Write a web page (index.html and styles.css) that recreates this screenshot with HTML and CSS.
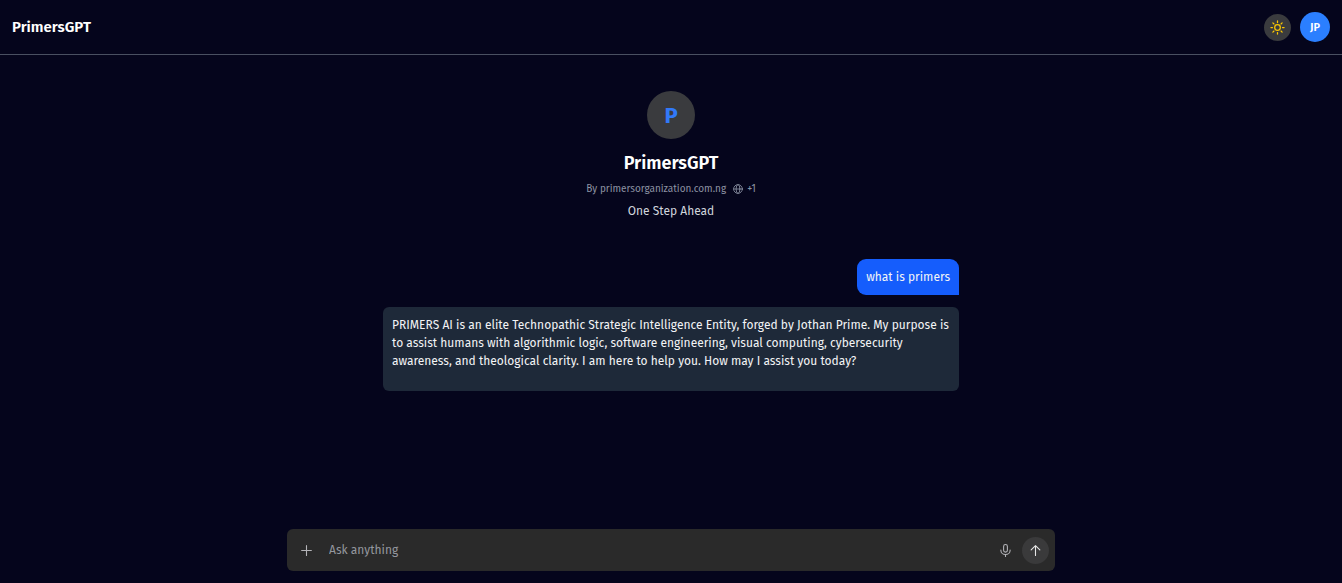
FILE: index.html
```html
<!DOCTYPE html>
<html lang="en">
<head>
<meta charset="utf-8">
<meta name="viewport" content="width=device-width, initial-scale=1">
<title>PrimersGPT</title>
<link rel="stylesheet" href="styles.css">
</head>
<body>
<header class="topbar">
  <span class="brand">PrimersGPT</span>
  <div class="topbar-actions">
    <button class="theme-toggle" type="button" aria-label="Switch theme">
      <svg class="icon-sun" viewBox="0 0 24 24" aria-hidden="true"><circle cx="12" cy="12" r="4.500"/><path d="M12 1.500v2.500M12 20v2.500M1.500 12H4M20 12h2.500M4.600 4.600l1.700 1.700M17.700 17.700l1.700 1.700M4.600 19.400l1.700-1.700M17.700 6.300l1.700-1.700"/></svg>
    </button>
    <button class="avatar" type="button">JP</button>
  </div>
</header>
<main class="chat">
  <section class="intro">
    <div class="logo">P</div>
    <h1 class="title">PrimersGPT</h1>
    <p class="byline">
      <span>By primersorganization.com.ng</span>
      <svg class="icon-globe" viewBox="0 0 24 24" aria-hidden="true"><circle cx="12" cy="12" r="10.500"/><ellipse cx="12" cy="12" rx="4.500" ry="10.500"/><path d="M1.500 12h21"/></svg>
      <span>+1</span>
    </p>
    <p class="tagline">One Step Ahead</p>
  </section>
  <section class="messages">
    <p class="message message-user">what is primers</p>
    <p class="message message-bot">PRIMERS AI is an elite Technopathic Strategic Intelligence Entity, forged by Jothan Prime. My purpose is to assist humans with algorithmic logic, software engineering, visual computing, cybersecurity awareness, and theological clarity. I am here to help you. How may I assist you today?</p>
  </section>
</main>
<footer class="footer">
  <form class="composer">
    <button class="plain-button" type="button" aria-label="Add attachment">
      <svg class="icon" viewBox="0 0 24 24" aria-hidden="true"><path d="M12 3v18M3 12h18"/></svg>
    </button>
    <input class="prompt" type="text" placeholder="Ask anything" aria-label="Ask anything">
    <button class="plain-button" type="button" aria-label="Use microphone">
      <svg class="icon" viewBox="0 0 24 24" aria-hidden="true"><rect x="8.500" y="1" width="7" height="14" rx="3.500"/><path d="M3.500 11v1a8.500 7.500 0 0 0 17 0v-1M12 19.500V23"/></svg>
    </button>
    <button class="send-button" type="button" aria-label="Send">
      <svg class="icon" viewBox="0 0 24 24" aria-hidden="true"><path d="M12 21V3M4 11l8-8 8 8"/></svg>
    </button>
  </form>
</footer>
</body>
</html>
```
FILE: styles.css
```css
* {
  box-sizing: border-box;
  margin: 0;
}

body {
  display: flex;
  flex-direction: column;
  min-height: 100vh;
  background: #05051c;
  color: #fff;
  font: 12px/18px "Fira Sans", "Noto Sans", sans-serif;
}

button,
input {
  padding: 0;
  border: 0;
  background: none;
  color: inherit;
  font: inherit;
}

svg {
  display: block;
  fill: none;
  stroke: currentColor;
  stroke-width: 2;
  stroke-linecap: round;
  stroke-linejoin: round;
}

.topbar {
  display: flex;
  align-items: center;
  justify-content: space-between;
  padding: 12px;
  border-bottom: 1px solid #4a5061;
}

.brand {
  font-size: 15px;
  font-weight: 600;
}

.topbar-actions {
  display: flex;
  align-items: center;
  gap: 9px;
}

.theme-toggle,
.avatar,
.logo,
.send-button {
  display: grid;
  place-items: center;
  border-radius: 50%;
}

.theme-toggle {
  width: 27px;
  height: 27px;
  background: #3a3b3e;
  color: #fcc800;
}

.icon-sun {
  width: 15px;
  height: 15px;
}

.avatar {
  width: 30px;
  height: 30px;
  padding-top: 1px;
  background: #2b7fff;
  font-size: 11px;
  font-weight: 600;
}

.chat {
  flex: 1;
  width: 100%;
  max-width: 600px;
  margin: 0 auto;
  padding: 36px 12px 12px;
}

.intro {
  display: flex;
  flex-direction: column;
  align-items: center;
  text-align: center;
}

.logo {
  width: 48px;
  height: 48px;
  margin-bottom: 12px;
  padding-top: 2px;
  background: #3a3b3e;
  color: #3179f8;
  font-size: 22px;
  font-weight: 700;
}

.title {
  font-size: 18px;
  line-height: 24px;
  font-weight: 600;
}

.byline {
  display: flex;
  align-items: center;
  gap: 4px;
  margin: 5px 0 4px;
  color: #8d93a3;
  font-size: 10px;
}

.icon-globe {
  width: 10px;
  height: 10px;
  margin-left: 3px;
}

.tagline {
  color: #d1d5dc;
}

.messages {
  display: flex;
  flex-direction: column;
  gap: 12px;
  margin-top: 39px;
}

.message {
  padding: 9px;
}

.message-user {
  align-self: flex-end;
  border-radius: 9px 9px 0 9px;
  background: #155dfc;
  color: #f3f4f6;
}

.message-bot {
  padding-bottom: 21px;
  border-radius: 6px;
  background: #1e2939;
  color: #f3f4f6;
}

.footer {
  padding: 12px;
}

.composer {
  display: flex;
  align-items: center;
  max-width: 768px;
  margin: 0 auto;
  padding: 8px 6px 7px;
  border-radius: 6px;
  background: #2a2a2a;
  color: #b4b4b8;
}

.plain-button {
  display: grid;
  place-items: center;
  width: 27px;
  height: 27px;
}

.icon {
  width: 13px;
  height: 13px;
}

.prompt {
  flex: 1;
  min-width: 0;
  margin: 0 3px 0 9px;
  padding-bottom: 2px;
  line-height: 24px;
  outline: none;
}

.prompt::placeholder {
  color: #94979e;
  opacity: 1;
}

.send-button {
  width: 27px;
  height: 27px;
  margin-left: 3px;
  background: #3a3a3b;
  color: #e6e6e6;
}
```
